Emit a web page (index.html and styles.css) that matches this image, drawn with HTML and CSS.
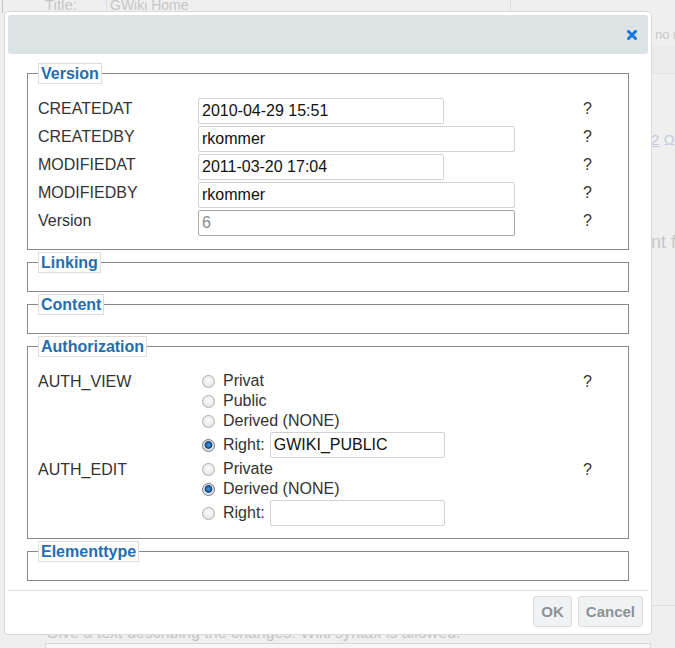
FILE: index.html
```html
<!DOCTYPE html>
<html lang="en">
<head>
<meta charset="utf-8">
<title>GWiki – Edit properties</title>
<link rel="stylesheet" href="styles.css">
</head>
<body>
<div class="page">
  <div class="bg-main">
    <div class="bg-title">
      <span class="bg-label">Title:</span>
      <span class="bg-value">GWiki Home</span>
    </div>
    <div class="bg-spacer"></div>
    <div class="bg-help">Give a text describing the changes. Wiki syntax is allowed.</div>
    <div class="bg-box"></div>
  </div>
  <div class="bg-side">
    <div class="bg-no">no rights</div>
    <div class="bg-band"></div>
    <div class="bg-sym"><u>2</u> Ω</div>
    <div class="bg-hint">nt for</div>
    <div class="bg-rule"></div>
  </div>
</div>

<div class="dialog" role="dialog">
  <div class="titlebar">
    <button class="close" type="button" aria-label="close">
      <svg width="10" height="10" viewBox="0 0 10 10"><path d="M1.5 1.5 L8.5 8.5 M8.5 1.5 L1.5 8.5" stroke="#1876e0" stroke-width="3" stroke-linecap="square" fill="none"/></svg>
    </button>
  </div>
  <div class="content">
    <fieldset class="group">
      <legend>Version</legend>
      <div class="rows">
        <span class="lbl">CREATEDAT</span>
        <div class="cell"><input class="txt short" type="text" value="2010-04-29 15:51"></div>
        <span class="help">?</span>

        <span class="lbl">CREATEDBY</span>
        <div class="cell"><input class="txt long" type="text" value="rkommer"></div>
        <span class="help">?</span>

        <span class="lbl">MODIFIEDAT</span>
        <div class="cell"><input class="txt short" type="text" value="2011-03-20 17:04"></div>
        <span class="help">?</span>

        <span class="lbl">MODIFIEDBY</span>
        <div class="cell"><input class="txt long" type="text" value="rkommer"></div>
        <span class="help">?</span>

        <span class="lbl">Version</span>
        <div class="cell"><input class="txt long disabled" type="text" value="6" disabled></div>
        <span class="help">?</span>
      </div>
    </fieldset>

    <fieldset class="group">
      <legend>Linking</legend>
    </fieldset>

    <fieldset class="group">
      <legend>Content</legend>
    </fieldset>

    <fieldset class="group">
      <legend>Authorization</legend>
      <div class="rows">
        <span class="lbl">AUTH_VIEW</span>
        <div class="cell opts">
          <label class="opt"><input class="radio" type="radio" name="view">Privat</label>
          <label class="opt"><input class="radio" type="radio" name="view">Public</label>
          <label class="opt"><input class="radio" type="radio" name="view">Derived (NONE)</label>
          <label class="opt opt-right"><input class="radio" type="radio" name="view" checked>Right: <input class="txt right" type="text" value="GWIKI_PUBLIC"></label>
        </div>
        <span class="help">?</span>

        <span class="lbl">AUTH_EDIT</span>
        <div class="cell opts">
          <label class="opt"><input class="radio" type="radio" name="edit">Private</label>
          <label class="opt"><input class="radio" type="radio" name="edit" checked>Derived (NONE)</label>
          <label class="opt opt-right"><input class="radio" type="radio" name="edit">Right: <input class="txt right" type="text" value=""></label>
        </div>
        <span class="help">?</span>
      </div>
    </fieldset>

    <fieldset class="group">
      <legend>Elementtype</legend>
    </fieldset>
  </div>
  <div class="buttonpane">
    <button class="btn" type="button">OK</button>
    <button class="btn" type="button">Cancel</button>
  </div>
</div>
</body>
</html>
```

FILE: styles.css
```css
html, body {
  margin: 0;
  padding: 0;
}

body {
  background: #efefef;
  font-family: "Liberation Sans", Arial, sans-serif;
  height: 648px;
  overflow: hidden;
}

/* ---------- background page (under the overlay) ---------- */
.page {
  display: flex;
  height: 648px;
}

.bg-main {
  width: 651px;
  flex: none;
  display: flex;
  flex-direction: column;
}

.bg-title {
  display: flex;
  height: 13px;
  overflow: hidden;
  margin-left: 2px;
  border-left: 1px solid #c2c2c2;
  color: #c6c6c6;
  font-size: 15px;
  line-height: 16px;
}

.bg-label {
  width: 61px;
  padding-left: 42px;
  margin-top: -3px;
  border-right: 1px solid #dddddd;
}

.bg-value {
  width: 400px;
  padding-left: 3px;
  margin-top: -3px;
  font-size: 14px;
  border-right: 1px solid #dddddd;
}

.bg-spacer {
  flex: 1;
}

.bg-help {
  margin-left: 46px;
  font-size: 16px;
  line-height: 18px;
  color: #c4c4c4;
  white-space: nowrap;
}

.bg-box {
  margin: 1px 0 0 45px;
  height: 4px;
  border: 1px solid #d8d8d8;
  border-bottom: 0;
  background: #f6f6f6;
}

.bg-side {
  flex: 1;
  overflow: hidden;
  color: #c8c8c8;
  font-size: 13px;
  white-space: nowrap;
}

.bg-no {
  margin: 27px 0 0 4px;
  line-height: 16px;
}

.bg-band {
  margin-top: 3px;
  height: 27px;
  background: #ebebeb;
  border-bottom: 1px solid #e2e2e2;
}

.bg-sym {
  margin-top: 58px;
  line-height: 16px;
  font-size: 15px;
  color: #c3cbdc;
}

.bg-hint {
  margin-top: 84px;
  font-size: 18px;
  line-height: 20px;
}

.bg-rule {
  margin-top: 353px;
  border-top: 1px solid #dcdcdc;
}

/* ---------- dialog ---------- */
.dialog {
  position: absolute;
  left: 4px;
  top: 11px;
  width: 640px;
  padding: 3px;
  background: #ffffff;
  border: 1px solid #dadada;
  border-radius: 4px;
}

.titlebar {
  height: 39px;
  box-sizing: border-box;
  background: #dce3e5;
  border-radius: 3px;
  display: flex;
  align-items: center;
  justify-content: flex-end;
  padding-right: 11px;
}

.close {
  border: 0;
  padding: 0;
  margin: 0;
  background: transparent;
  width: 10px;
  height: 10px;
  display: flex;
}

.content {
  padding: 9px 19px 7px;
}

.group {
  margin: 0 0 2px;
  padding: 8px 10px 10px;
  border: 1px solid #888888;
  min-width: 0;
}

.group legend {
  padding: 0 2px;
  border: 1px solid #dddddd;
  font-size: 16px;
  font-weight: bold;
  line-height: 19px;
  color: #236eb0;
}

.rows {
  display: grid;
  grid-template-columns: 160px 385px auto;
  grid-auto-rows: auto;
  margin: 6px 0 1px;
  color: #333333;
  font-size: 16px;
}

.lbl,
.help {
  line-height: 21px;
}

.cell {
  height: 28px;
}

.txt {
  box-sizing: border-box;
  height: 26px;
  margin: 0;
  padding: 0 3px;
  border: 1px solid #d2d2d2;
  border-radius: 2px;
  background: #ffffff;
  font-family: "Liberation Sans", Arial, sans-serif;
  font-size: 16px;
  color: #111111;
  outline: none;
}

.short {
  width: 246px;
}

.long {
  width: 317px;
}

.disabled {
  border-color: #a9a9a9;
  color: #8a8a8a;
  background: #ffffff;
}

.opts {
  height: auto;
  display: flex;
  flex-direction: column;
}

.opt {
  display: flex;
  align-items: center;
  height: 20px;
  line-height: 20px;
}

.opt-right {
  height: 28px;
}

.radio {
  appearance: none;
  -webkit-appearance: none;
  box-sizing: border-box;
  width: 13px;
  height: 13px;
  margin: 0 8px 0 4px;
  border-radius: 50%;
  border: 1px solid #adadad;
  background: radial-gradient(circle at 50% 40%, #fbfbfb 0, #ececec 55%, #d4d4d4 100%);
}

.radio:checked {
  border-color: #707a84;
  background: radial-gradient(circle at 50% 45%, #4aa0e6 0, #1d67ae 2.3px, #163f66 3.4px, #e6e6e6 4.3px, #d2d2d2 100%);
}

.right {
  width: 175px;
  margin-left: 5px;
}

/* ---------- buttons ---------- */
.buttonpane {
  border-top: 1px solid #dddddd;
  padding: 5px 5px 4px;
  display: flex;
  justify-content: flex-end;
  gap: 6px;
}

.btn {
  height: 31px;
  padding: 0 7px;
  margin: 0;
  border: 1px solid #dcdcdc;
  border-radius: 3px;
  background: #f1f2f3;
  font-family: "Liberation Sans", Arial, sans-serif;
  font-size: 15px;
  font-weight: bold;
  color: #8a9299;
}
```
